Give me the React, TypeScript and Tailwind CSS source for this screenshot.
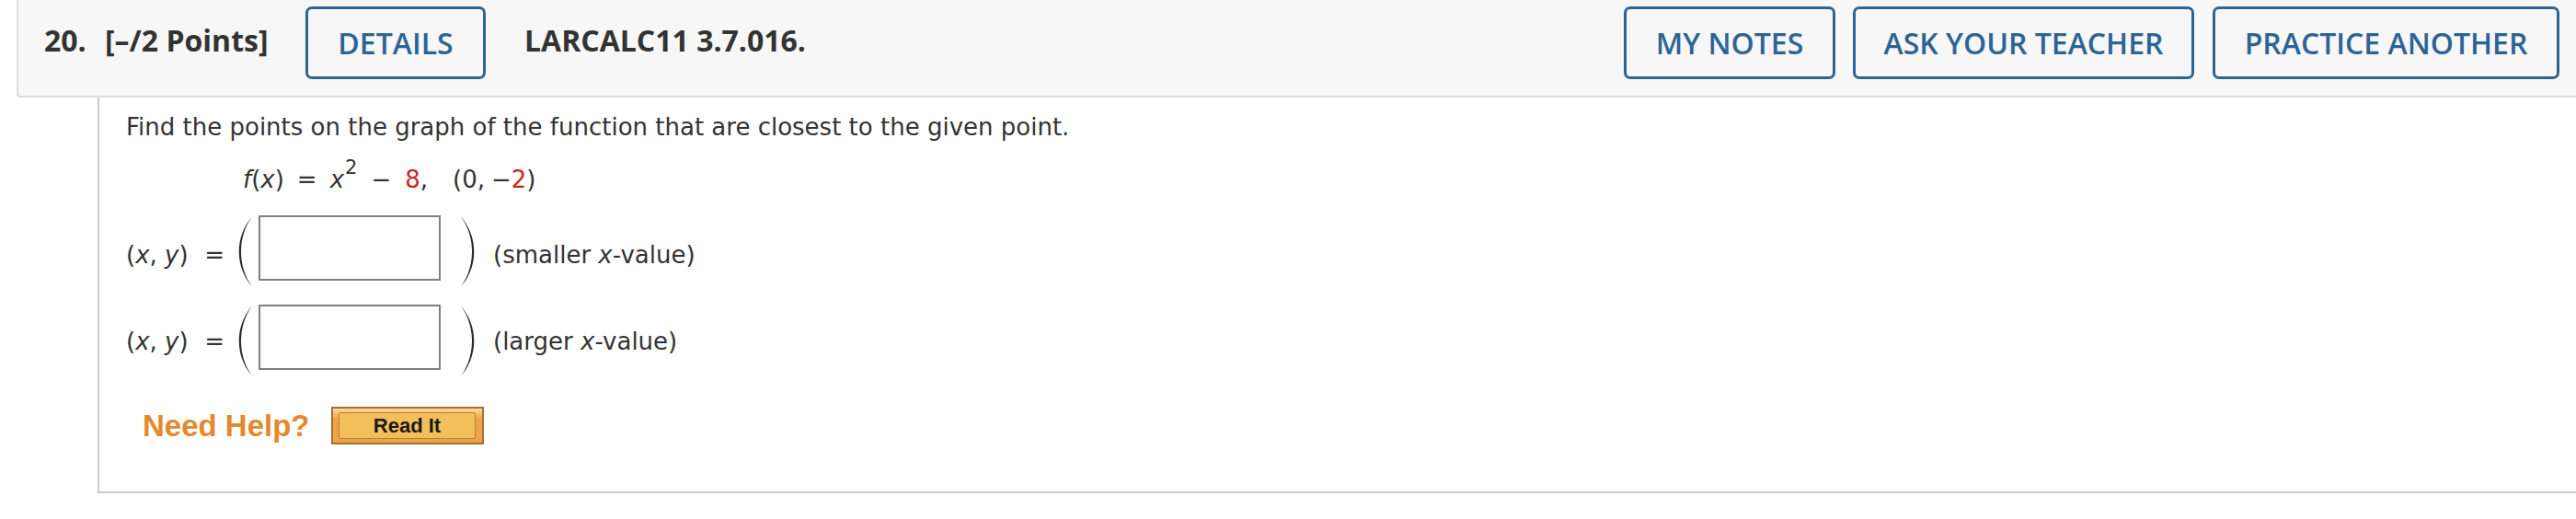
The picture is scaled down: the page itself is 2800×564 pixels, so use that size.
import React from "react";

function LParen() {
  return (
    <svg width="17" height="77" viewBox="0 0 17 77" className="block shrink-0">
      <path d="M16 0.5 C -3 22 -3 55 16 76.5 C 0 55 0 22 16 0.5 Z" fill="#2a2a2a" />
    </svg>
  );
}

function RParen() {
  return (
    <svg width="17" height="77" viewBox="0 0 17 77" className="block shrink-0">
      <path d="M1 0.5 C 20 22 20 55 1 76.5 C 17 55 17 22 1 0.5 Z" fill="#2a2a2a" />
    </svg>
  );
}

function AnswerRow({
  label,
  className,
  textTop,
}: {
  label: React.ReactNode;
  className: string;
  textTop: string;
}) {
  return (
    <div className={"flex items-start " + className}>
      <div className={"w-[121px] pr-[14px] flex leading-[36px] whitespace-nowrap " + textTop}>
        <span>
          (<i>x</i>, <i>y</i>)
        </span>
        <span className="ml-auto">=</span>
      </div>
      <div className="mt-[1px]">
        <LParen />
      </div>
      <div className="ml-[6px] w-[198px] h-[71px] border-2 border-[#808080] bg-white shrink-0" />
      <div className="ml-[21px] mt-[1px]">
        <RParen />
      </div>
      <div className={"ml-[19px] leading-[36px] whitespace-nowrap " + textTop}>{label}</div>
    </div>
  );
}

function BlueButton({ children, w, className = "" }: { children: React.ReactNode; w: string; className?: string }) {
  return (
    <div
      className={
        "h-[79px] border-[3px] border-[#2c6496] rounded-[7px] flex items-center justify-center text-[#2c6496] font-semibold text-[32px] whitespace-nowrap shrink-0 " +
        w +
        " " +
        className
      }
    >
      {children}
    </div>
  );
}

export default function App() {
  return (
    <div className="w-[2800px] h-[564px] bg-white overflow-hidden font-['DejaVu_Sans',Verdana,sans-serif] text-[26px] text-[#333333]">
      {/* Header */}
      <div className="ml-[18px] h-[106px] bg-[#f7f7f7] border-l-2 border-b-2 border-[#dddddd] rounded-bl-[4px] pt-[7px] pl-[28px] pr-[18px] font-['Open_Sans',sans-serif]">
        <div className="flex items-center h-[79px]">
          <span className="w-[66px] shrink-0 font-bold text-[32px] text-[#333333] mb-[5px] whitespace-nowrap">20.</span>
          <span className="w-[218px] shrink-0 font-bold text-[32px] text-[#333333] mb-[5px] whitespace-nowrap">[–/2 Points]</span>
          <BlueButton w="w-[196px]">DETAILS</BlueButton>
          <span className="ml-[42px] font-bold text-[32px] text-[#333333] mb-[5px] whitespace-nowrap">LARCALC11 3.7.016.</span>
          <div className="ml-auto flex items-center">
            <BlueButton w="w-[230px]">MY NOTES</BlueButton>
            <BlueButton w="w-[371px]" className="ml-[19px]">ASK YOUR TEACHER</BlueButton>
            <BlueButton w="w-[377px]" className="ml-[20px]">PRACTICE ANOTHER</BlueButton>
          </div>
        </div>
      </div>

      {/* Question body */}
      <div className="ml-[106px] h-[430px] border-l-2 border-b-2 border-[#cbcbcb] pl-[29px] pt-[14px]">
        <div className="leading-[36px] whitespace-nowrap">
          Find the points on the graph of the function that are closest to the given point.
        </div>
        <div className="mt-[21px] pl-[127px] leading-[36px] h-[36px] whitespace-nowrap flex items-baseline">
          <i>f</i>
          <span>(</span>
          <i>x</i>
          <span>)</span>
          <span className="mx-[14px]">=</span>
          <i>x</i>
          <span className="relative -top-[15px] ml-[1px] text-[21px] leading-none">2</span>
          <span className="mx-[15px]">−</span>
          <span className="text-[#c8281e]">8</span>
          <span>,</span>
          <span className="ml-[27px]">(0,</span>
          <span className="ml-[7px]">−</span>
          <span className="text-[#c8281e]">2</span>
          <span>)</span>
        </div>

        <AnswerRow
          className="mt-[21px]"
          textTop="mt-[25px]"
          label={
            <>
              (smaller <i>x</i>-value)
            </>
          }
        />
        <AnswerRow
          className="mt-[19px]"
          textTop="mt-[22px]"
          label={
            <>
              (larger <i>x</i>-value)
            </>
          }
        />

        <div className="mt-[33px] flex items-start">
          <div className="ml-[18px] w-[205px] mt-[4px] font-['Liberation_Sans',Arial,sans-serif] font-bold text-[33px] leading-[33px] text-[#e4892e] whitespace-nowrap">
            Need Help?
          </div>
          <div className="w-[166px] h-[41px] border-2 border-[#a86f2f] bg-[linear-gradient(#f8d9a0,#eea24a_30%,#eea24a)] pt-[4px] pl-[6px] pr-[7px]">
            <div className="h-[29px] border border-[#b98140] rounded-[2px] bg-[#f3bf5b] flex items-center justify-center font-['Liberation_Sans',Arial,sans-serif] font-bold text-[22px] leading-none text-[#1a1a1a]">
              Read It
            </div>
          </div>
        </div>
      </div>
    </div>
  );
}
